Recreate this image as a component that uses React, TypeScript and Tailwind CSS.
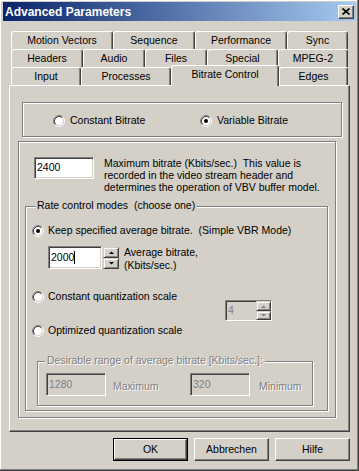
import clsx from "clsx";
import { ReactNode } from "react";

const tabRows: Array<Array<[string, string]>> = [
  [
    ["Motion Vectors", "w-[102px]"],
    ["Sequence", "w-[82px]"],
    ["Performance", "w-[92px]"],
    ["Sync", "w-[61px]"],
  ],
  [
    ["Headers", "w-[72px]"],
    ["Audio", "w-[62px]"],
    ["Files", "w-[62px]"],
    ["Special", "w-[71px]"],
    ["MPEG-2", "w-[70px]"],
  ],
  [
    ["Input", "w-[70px]"],
    ["Processes", "w-[90px]"],
    ["Bitrate Control", "w-[108px]"],
    ["Edges", "w-[69px]"],
  ],
];

const Radio = ({ checked }: { checked?: boolean }) => (
  <svg width="12" height="12" viewBox="0 0 12 12" className="shrink-0">
    <circle cx="6" cy="6" r="4.5" fill="#fff" />
    <path d="M2.11 9.89 A5.5 5.5 0 0 1 9.89 2.11" stroke="#808080" fill="none" />
    <path d="M9.89 2.11 A5.5 5.5 0 0 1 2.11 9.89" stroke="#fff" fill="none" />
    <path d="M2.82 9.18 A4.5 4.5 0 0 1 9.18 2.82" stroke="#404040" fill="none" />
    <path d="M9.18 2.82 A4.5 4.5 0 0 1 2.82 9.18" stroke="#d4d0c8" fill="none" />
    {checked && <circle cx="6" cy="6" r="2" fill="#000" />}
  </svg>
);

const Etched = ({
  className,
  label,
  labelLeft,
  disabled,
  children,
}: {
  className?: string;
  label?: string;
  labelLeft?: string;
  disabled?: boolean;
  children?: ReactNode;
}) => (
  <div
    className={clsx(
      "relative border border-[#808080] shadow-[inset_1px_1px_0_#fff,1px_1px_0_#fff]",
      className
    )}
  >
    {label && (
      <span
        className={clsx(
          "absolute -top-[8px] px-[2px] bg-[#d4d0c8] leading-[13px] whitespace-pre",
          labelLeft,
          disabled && "text-[#808080] [text-shadow:1px_1px_0_#fff]"
        )}
      >
        {label}
      </span>
    )}
    {children}
  </div>
);

const Field = ({
  value,
  className,
  disabled,
  caret,
}: {
  value: string;
  className?: string;
  disabled?: boolean;
  caret?: boolean;
}) => (
  <div
    className={clsx(
      "flex items-center pl-[2px] border border-[#808080] border-b-white border-r-white shadow-[inset_1px_1px_0_#404040,inset_-1px_-1px_0_#d4d0c8]",
      disabled ? "bg-[#d4d0c8] text-[#808080]" : "bg-white",
      className
    )}
  >
    {value}
    {caret && <span className="w-px h-[13px] bg-black" />}
  </div>
);

const Arrow = ({ up, disabled }: { up?: boolean; disabled?: boolean }) => (
  <svg width="5" height="3" viewBox="0 0 5 3">
    <polygon
      points={up ? "0,3 5,3 2.5,0.5" : "0,0 5,0 2.5,2.5"}
      fill={disabled ? "#808080" : "#000"}
    />
  </svg>
);

const SpinBtn = ({ up, disabled, className }: { up?: boolean; disabled?: boolean; className?: string }) => (
  <div
    className={clsx(
      "flex items-center justify-center border border-[#d4d0c8] border-r-[#404040] border-b-[#404040] shadow-[inset_1px_1px_0_#fff,inset_-1px_-1px_0_#808080]",
      className
    )}
  >
    <Arrow up={up} disabled={disabled} />
  </div>
);

const Button = ({ label, def }: { label: string; def?: boolean }) => (
  <div className={clsx("w-[75px] h-[23px]", def ? "border border-black" : "")}>
    <div className="h-full flex items-center justify-center border border-white border-r-[#404040] border-b-[#404040] shadow-[inset_-1px_-1px_0_#808080]">
      {label}
    </div>
  </div>
);

const App = () => {
  return (
    <div className="w-[359px] h-[471px] bg-[#d4d0c8] pl-[3px] pr-[2px] pt-[2px] border-r border-b border-[#404040] shadow-[inset_-1px_-1px_0_#808080,inset_1px_1px_0_#fff] font-['Liberation_Sans',Arial,sans-serif] text-[10.5px] text-black overflow-hidden">
      <div className="h-[19px] flex items-center justify-between pl-[2px] pr-[2px] bg-[linear-gradient(to_right,#0a246a,#a6caf0)]">
        <span className="text-white font-bold text-[12px] leading-[14px]">Advanced Parameters</span>
        <div className="w-[16px] h-[14px] flex items-center justify-center border border-white border-r-[#404040] border-b-[#404040] bg-[#d4d0c8] shadow-[inset_-1px_-1px_0_#808080]">
          <svg width="8" height="7" viewBox="0 0 8 7">
            <path d="M0.5 0.5 L7.5 6.5 M7.5 0.5 L0.5 6.5" stroke="#000" strokeWidth="1.6" />
          </svg>
        </div>
      </div>

      <div className="ml-[8px] mt-[10px] w-[337px]">
        {tabRows.map((row, i) => (
          <div key={i} className="flex items-start h-[18px]">
            {row.map(([label, w]) => {
              const active = label === "Bitrate Control";
              return (
                <div
                  key={label}
                  className={clsx(
                    "flex items-center justify-center border-l border-t border-r border-white border-r-[#404040] rounded-t-[3px] shadow-[inset_-1px_0_0_#808080]",
                    w,
                    active ? "h-[21px] -mt-[2px] pb-[2px] relative z-10 bg-[#d4d0c8]" : "h-[18px]"
                  )}
                >
                  {label}
                </div>
              );
            })}
          </div>
        ))}
      </div>

      <div className="ml-[6px] w-[341px] h-[347px] border border-white border-r-[#404040] border-b-[#404040] shadow-[inset_-1px_-1px_0_#808080]">
        <Etched className="ml-[12px] mt-[16px] w-[320px] h-[35px]">
          <div className="h-full flex items-center pt-[3px] pl-[30px]">
            <div className="w-[147px] flex items-center gap-[5px]">
              <Radio />
              <span>Constant Bitrate</span>
            </div>
            <div className="flex items-center gap-[5px]">
              <Radio checked />
              <span>Variable Bitrate</span>
            </div>
          </div>
        </Etched>

        <Etched className="ml-[8px] mt-[4px] w-[318px] h-[277px]">
          <div className="flex items-start pt-[15px] pl-[15px]">
            <Field value="2400" className="w-[60px] h-[22px]" />
            <div className="ml-[10px] leading-[12px] whitespace-pre">
              <div>Maximum bitrate (Kbits/sec.)  This value is</div>
              <div>recorded in the video stream header and</div>
              <div>determines the operation of VBV buffer model.</div>
            </div>
          </div>

          <Etched
            className="ml-[6px] mt-[13px] w-[303px] h-[205px]"
            label="Rate control modes  (choose one)"
            labelLeft="left-[9px]"
          >
            <div className="mt-[17px] pl-[6px] flex items-center gap-[4px] h-[13px] whitespace-pre">
              <Radio checked />
              <span>Keep specified average bitrate.  (Simple VBR Mode)</span>
            </div>
            <div className="mt-[9px] pl-[22px] flex items-start">
              <Field value="2000" caret className="w-[54px] h-[23px]" />
              <div className="ml-[1px] mt-[1px] w-[16px] flex flex-col">
                <SpinBtn up className="h-[11px]" />
                <SpinBtn className="h-[11px]" />
              </div>
              <div className="ml-[5px] leading-[13px]">
                <div>Average bitrate,</div>
                <div>(Kbits/sec.)</div>
              </div>
            </div>
            <div className="mt-[18px] pl-[6px] flex items-start">
              <div className="w-[193px]">
                <div className="flex items-center gap-[4px] h-[13px]">
                  <Radio />
                  <span>Constant quantization scale</span>
                </div>
                <div className="mt-[21px] flex items-center gap-[4px] h-[13px]">
                  <Radio />
                  <span>Optimized quantization scale</span>
                </div>
              </div>
              <div className="mt-[10px] flex h-[21px] border border-[#808080] border-b-white border-r-white">
                <div className="w-[30px] pl-[2px] flex items-center text-[#808080] shadow-[inset_1px_1px_0_#404040]">
                  4
                </div>
                <div className="w-[15px] flex flex-col">
                  <SpinBtn up disabled className="h-[10px]" />
                  <SpinBtn disabled className="h-[9px]" />
                </div>
              </div>
            </div>

            <Etched
              className="ml-[11px] mt-[24px] w-[276px] h-[45px]"
              label="Desirable range of average bitrate [Kbits/sec.]:"
              labelLeft="left-[7px]"
              disabled
            >
              <div className="mt-[11px] ml-[8px] flex items-start">
                <Field value="1280" disabled className="w-[60px] h-[23px]" />
                <span className="ml-[7px] mt-[6px] w-[77px] text-[#808080] [text-shadow:1px_1px_0_#fff]">
                  Maximum
                </span>
                <Field value="320" disabled className="w-[60px] h-[23px]" />
                <span className="ml-[9px] mt-[6px] text-[#808080] [text-shadow:1px_1px_0_#fff]">
                  Minimum
                </span>
              </div>
            </Etched>
          </Etched>
        </Etched>
      </div>

      <div className="ml-[110px] mt-[6px] flex gap-[6px]">
        <Button label="OK" def />
        <Button label="Abbrechen" />
        <Button label="Hilfe" />
      </div>
    </div>
  );
};

export default App;
